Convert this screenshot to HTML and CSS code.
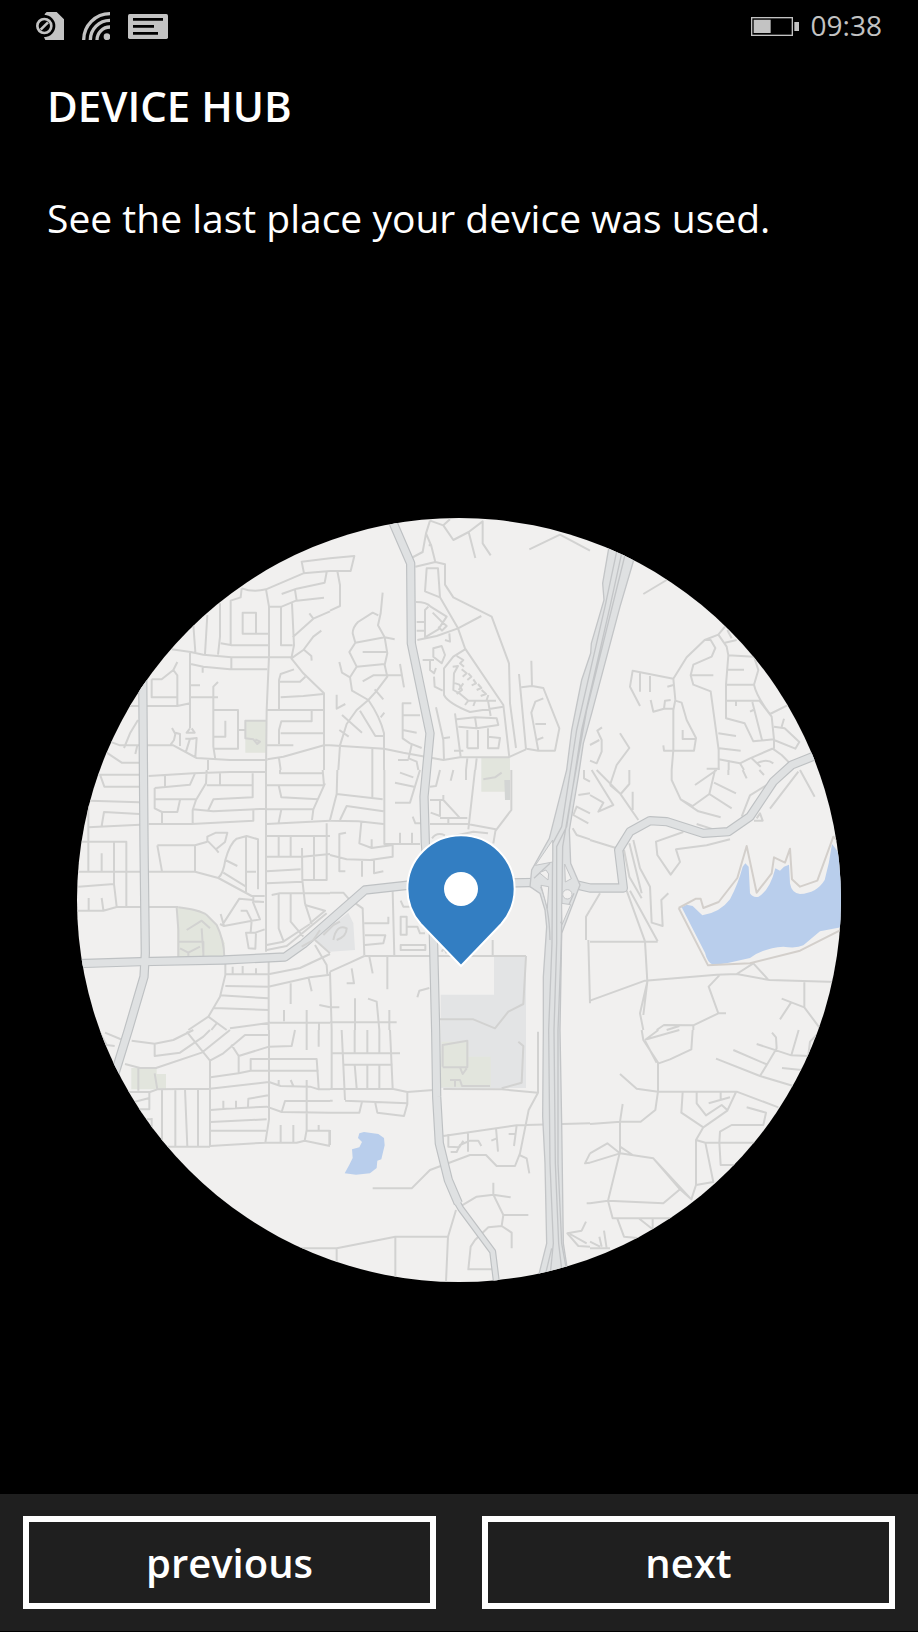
FILE: index.html
```html
<!DOCTYPE html>
<html lang="en">
<head>
    <meta charset="UTF-8">
    <meta name="viewport" content="width=device-width, initial-scale=1.0">
    <title>Device Hub</title>
    <link rel="stylesheet" href="styles.css">
</head>
<body>
    <header class="status-bar">
        <div class="status-icons">
            <svg class="icon-sim" viewBox="0 0 84 84" role="img" aria-label="No SIM">
                <path fill="currentColor" d="M26 6 32 0H62L84 22V84H28L24 76A36 36 0 0 0 26 8Z"/>
                <circle class="sim-gap" cx="25" cy="42" r="33"/>
                <circle class="sim-ring" cx="25" cy="42" r="21"/>
                <path class="sim-ring" d="M14 53 36 31"/>
            </svg>
            <svg class="icon-wifi" viewBox="0 0 84 84" role="img" aria-label="Wi-Fi">
                <path class="wave" d="M5 84A79 79 0 0 1 84 5M25 84A59 59 0 0 1 84 25M45 84A39 39 0 0 1 84 45"/>
                <circle fill="currentColor" cx="75" cy="74" r="10"/>
            </svg>
            <svg class="icon-message" viewBox="0 0 120 75" role="img" aria-label="Message">
                <rect fill="currentColor" width="120" height="75" rx="5"/>
                <path class="lines" d="M15 16H105M15 37H78M15 58H90"/>
            </svg>
        </div>
        <div class="status-info">
            <svg class="icon-battery" viewBox="0 0 144 57" role="img" aria-label="Battery">
                <rect class="shell" x="2" y="2" width="122" height="53"/>
                <path fill="currentColor" d="M8 8H59V48H8ZM130 15H144V42H130Z"/>
            </svg>
            <time>09:38</time>
        </div>
    </header>

    <main class="content">
        <h1>DEVICE HUB</h1>
        <p class="description">See the last place your device was used.</p>

        <svg class="map" viewBox="21 24 2292 2292" role="img" aria-label="Map with the last location of the device">
            <rect class="land" width="2340" height="2340"/>

            <!-- parks -->
            <g class="park">
                <path d="M526 632H588V728H526Z"/>
                <path d="M1234 744H1320V845H1234Z"/>
                <path d="M322 1192 390 1202 440 1244 464 1300V1344H322Z"/>
                <path d="M184 1674H260V1692H288V1738H184Z"/>
            </g>

            <!-- campus -->
            <path class="campus" d="M1272 1340H1368V1734H1112V1454H1272Z"/>
            <path class="campus" d="M780 1250 835 1208 850 1240 855 1320 780 1325 735 1290Z"/>
            <path class="park" d="M1115 1595H1195V1640H1262V1732H1112Z"/>

            <!-- water -->
            <path class="water" d="M1835 1192 1850 1184 1868 1188 1897 1216Q1950 1208 1980 1168 2005 1120 2018 1070L2026 1060 2036 1070 2040 1150Q2050 1165 2066 1160 2100 1140 2116 1075L2130 1082 2142 1070 2157 1064 2160 1120Q2165 1150 2190 1152 2240 1150 2264 1110 2278 1060 2286 1002L2300 1020 2340 1100V1246L2250 1264 2200 1306Q2180 1316 2140 1310 2080 1314 2040 1344L1970 1360 1930 1365Q1912 1358 1905 1328Z"/>
            <path class="water" d="M868 1870 882 1866 925 1872 942 1884 944 1906 934 1948 922 1952 920 1974 900 1990 858 1994 824 1990 838 1964 848 1944 846 1918 868 1912 876 1896 864 1884Z"/>

            <!-- streets, north west -->
            <g class="street">
                <path d="M780 145 695 155 702 190M515 235Q550 248 588 238L700 190 780 183M515 235 512 262 482 272V405L452 400M635 252 680 236 764 218 770 186M675 240 680 272 762 263M588 238 597 290V440L590 600 588 780M597 290H635L678 272M633 290V406H668M666 280 672 406 664 445 700 490 762 550V780M518 308H558V371H518ZM558 371H597M668 382 730 326 780 304M718 310 730 326M664 445 700 420 730 380 754 362M700 418 724 438 725 452"/>
                <path d="M483 406H597M305 418 362 426 400 434 484 442H664M370 345 376 426M412 315 405 432M450 280V380L444 434M484 442V476M360 426V655M362 462 400 470 480 478H592M398 470V488M245 508H275L310 480 322 456M310 480 322 496V585M245 508V562H322M180 588H322L360 580M360 526H390M360 562H444M444 516 430 530V710L436 748M430 600H504V716H430M430 680H466V632M504 660H526V632H588M526 660V685L550 688 562 702 570 695 556 688M590 600H762M672 478 632 492 627 510V598M627 515H690L706 500M632 562 700 558 760 552M588 706H670M725 600V634H634L627 660V702M632 670H762M592 748 640 740 762 706H780M627 745 632 780"/>
                <path d="M204 630 180 670 162 714M120 695 150 706H310L380 744 480 750H592M196 732 202 706M110 728 155 758H208M414 750V780M306 654 316 672 312 690 302 704M316 668 330 672V708M348 725 360 686 380 684 376 740M360 655 350 668H374L365 655M346 686H372"/>
            </g>

            <!-- streets, north -->
            <g class="street" transform="translate(780 0)">
                <path d="M0 145 73 138 62 183H0M22 183 30 225V288L0 302M158 248 152 310 144 346 164 382 172 430 164 465 172 500 138 545 115 570M145 316 128 308 84 336Q68 352 68 370L76 398 58 426 80 470 60 502 66 542 115 570 80 600 50 642 30 706 25 780M76 398 164 382 194 388M98 426H172M80 470 164 462M98 514 130 496H216M210 462 222 532M28 456 36 488 60 502M20 554V596L46 582M134 538 160 568M115 570Q150 620 162 670V780M90 602 136 678H162M152 622 163 608M36 615 96 668M28 660 56 680M0 706 162 716 220 728 340 750 390 742H535L588 718"/>
                <path d="M244 580H218V685L240 700 275 714M218 616H270M218 660 260 668M245 704 236 745 260 755 265 780M204 750H236M127 716V780M244 144 278 126 288 70 300 32M288 70 304 108 316 156M296 106H306M256 170 316 156 345 163V224L370 262 485 320 537 460 540 580 558 714M300 32 340 46 370 90 416 66 458 34V100L482 136M416 66 436 144M340 46 360 28M598 118 690 74 780 122M290 175H324L330 262 285 244ZM330 262 384 355 405 415 520 585 538 742M384 355 454 318M384 355 320 378 262 390"/>
                <path d="M258 276Q290 276 302 290L350 320 325 358 285 382V300L295 290M260 336H284M260 362H284M308 308 332 332 350 348 336 362 325 350M358 370 360 395 345 390M310 415 335 408 345 435 335 460 310 440ZM278 450H312M300 452V480L312 490 318 474M312 500 314 530 338 542M405 418 370 440 342 475V555Q355 580 420 606L520 590M380 438 400 450 390 460 402 470M368 470 384 468 372 490 370 540 388 550M395 478 410 490 398 500M415 490 424 500 412 510M430 508 438 520 425 526M444 522 454 534 440 540M455 540 468 552 452 558M475 555 470 570M370 518 388 524 396 540 380 552M400 520 386 540M388 550 415 572H498M415 572 405 585M436 572 430 588M474 572 482 618"/>
                <path d="M375 610 392 740M380 628 435 622 500 625 505 645 440 655 385 650M435 622 440 655M412 660V715M444 660V715H412M474 655V715H505L510 684 474 680M318 592 340 690 342 750M340 685 360 682M372 722H400M440 745 436 780M412 745 408 780M604 452 606 528 574 532M567 492 588 718M574 532 606 528 640 534 688 655 675 722H625L590 716M640 565 616 575 604 608 625 722M616 642H648M620 690 640 682"/>
            </g>

            <!-- streets, north east -->
            <g class="street" transform="translate(1560 0)">
                <path d="M160 252 230 210M405 350 385 374 410 410 415 436 408 524H492L505 480 492 440 414 436M405 398 440 390M412 360 425 385M385 374 344 390 290 442 250 506 128 482 120 530 150 588M250 506 256 570 250 600V720L245 780M344 390 362 390 376 414 365 440 310 464 302 496 310 524 362 544 386 720V780M302 496H370M410 479H462M150 490V545M180 498V546M250 525 232 530M182 570 190 605 222 596H248M222 596 225 572 242 570M256 572 275 578 290 630 318 684 312 722H222L220 706M278 660V687H318M408 524V625L464 640 490 694 552 688 545 620 508 572H410M492 524Q500 560 540 612L592 586M487 576 516 690M438 574V588M480 605 490 600M552 650 584 655 628 696 616 716 552 690V714L480 745 450 760 386 748M582 626 575 650M385 670 438 678M388 715 452 722M548 716 575 735 600 760M485 745 512 770M500 760Q530 745 550 760M416 750V780M450 760 462 780"/>
                <path d="M36 652 22 662 35 690V725L20 760 0 752M28 690 0 705M90 670 118 714 80 765 75 780M350 776H388"/>
            </g>

            <!-- streets, west -->
            <g class="street" transform="translate(0 780)">
                <path d="M85 14H210M90 14 103 50H208M60 92 208 97M208 132 102 126 95 168M55 100V305M55 172 210 164M236 162H365L550 152V116M236 18 370 10 480 6H588M285 18V50M254 54 360 44 375 10M254 54V115L276 126V160M254 88H380M330 90 322 126H276M410 0 408 40 378 90 368 120V160M450 10V46M410 46H548V10M548 46V82L430 88 415 120M368 118 430 124 588 116M588 0V545M630 0V10H760M590 46H762L758 0M626 46 634 82 745 88M765 40 730 118 726 150M590 118H730M634 118 626 158M590 162 780 152M590 198H780M626 198V258M662 198V258M590 260H698L780 252M732 198V330M770 160V330H698M696 234 697 330 705 400 725 462M590 304 692 298M590 340 697 335M605 375 630 370H780"/>
                <path d="M35 215H169V410M132 215V342L140 410M95 250V302M22 305H375L445 324 545 378H584M25 350 132 342M22 422H100L140 411H325M56 384V420M95 384 100 420M262 226 276 304M262 226H375V304M375 226 412 215M412 200 438 188 472 188 465 216 438 238 412 212ZM438 238 446 248M445 324Q460 310 466 270 480 220 500 206L530 198 564 208V358M528 198V366M528 305H558M466 270 502 288M460 308 528 350M550 378V394L582 396M548 394 570 448 462 468 450 462M550 390 508 386 460 460M452 432 462 468M512 422 530 422 545 452 542 486M528 488H558L556 536 536 535ZM556 488 584 478M626 370V475L640 512M662 370V455L700 500M705 405 765 422 720 460M590 525 640 515 720 462M590 540 650 528 770 430"/>
                <path d="M322 515H400V560M320 412 325 480V560M325 412Q390 420 410 435L440 465Q462 510 463 560M350 480 395 452 420 475M395 475 400 550M330 535 355 548 390 530M355 548V560M466 575V615L450 680 415 740 355 780M488 590V612M518 588V612M558 595V612M466 613H595L690 594 780 552M596 575V780M466 648 595 650 720 622 780 614M450 676 595 685M432 714 595 720M415 740 470 780M440 760 424 780M480 775 600 758H780M662 640V702M716 625 725 664M642 720V754M710 720V780M748 705 780 712M747 758V780M735 525 770 585 772 612"/>
            </g>

            <!-- streets, centre -->
            <g class="street" transform="translate(780 780)">
                <path d="M22 0 20 72 0 150M20 72 158 88M127 0V82M163 0V222H270M160 124 50 108 30 150M0 152 85 154 160 162M94 156 88 220 125 234 188 225V260L120 270 50 268 0 255M125 208V234M48 188 28 192V304H46M96 270V320M132 270V310L160 304M210 188V220M246 188V220M210 8 250 22M195 38 252 50M195 98H240L270 0M248 140 256 160H275M300 50 318 48 330 0M370 0 362 32M408 0V30M435 0 415 178M300 90H340L388 142M330 90V138L302 128M340 75V90M330 144H412M355 145V160M300 162H412L497 178 490 220M544 0V120L497 182M306 205Q320 185 345 196M360 200 430 185 474 190M460 28 495 22 515 8M0 368H40L55 385 98 415 103 555M188 364 193 558M103 460H175V440M105 496H166L160 520 105 525M103 558H588M0 605 60 578 103 558M172 558V658M118 560 128 610M65 595 72 640H50M212 392 220 410H240M212 440H230V494H212ZM230 470H262L270 490H285M212 525H286V540H212ZM262 682 268 662 298 654M75 685V780M114 686 140 695 148 780M178 720V780M0 605 5 780M0 757H200M0 712H28M488 510V558M335 545Q342 530 350 550M588 558 580 702 535 725 495 775 430 748H330"/>
                <path d="M780 130 740 110 730 135 775 160M780 70 745 75M728 175 740 195 780 208M780 420 768 440V510M775 510 780 700M762 0V25L780 35"/>
            </g>
            <path class="marker-block" d="M1303 810H1320V870H1305Z"/>

            <!-- streets, east -->
            <g class="street" transform="translate(1560 780)">
                <path d="M5 0 70 105 25 125 40 98 0 75M20 0 90 70 145 150M75 0 60 45M118 0V42L92 72 60 45M128 65V120M245 0V30L272 88 325 124 392 142M272 88 308 108 358 72 375 0M380 0 315 45M372 38 438 70M358 72 425 115M415 0V15M458 0 470 25M508 0 522 15M630 0 674 80M625 5 540 116M455 140 480 76 530 45M500 145 510 130 518 152H492M320 162 370 178M0 210 78 234M30 370 0 420M110 362 165 514M120 362 203 514M0 515H203M102 240 118 320 155 385M130 210 150 295 180 350 185 458 218 468 214 390 235 370M118 220 155 370M280 186 198 215 202 255 242 314 270 276 258 238 350 226 420 208"/>
                <path d="M165 515 172 635 150 730 160 780M172 635 160 735M0 692 165 632 380 614 440 612 538 630 740 636M388 616 356 650 385 730H408M440 612 490 580 534 628M385 730 310 766 222 765 200 780M310 765V780M268 768 230 780M643 634V712M575 686 643 712 690 775M605 695 570 748"/>
            </g>

            <!-- shore roads -->
            <path class="shore" d="M1826 1194 1878 1166 1892 1166 1900 1194 1946 1176 2002 1104 2030 1008 2060 1148 2105 1090 2112 1042 2145 1058 2160 1016 2166 1108 2190 1130 2242 1112 2290 980 2310 1000M2320 1256 2190 1322 2040 1360 1914 1366 1826 1194"/>

            <!-- streets, south west -->
            <g class="street" transform="translate(0 1560)">
                <path d="M105 8 158 30M88 5 110 45 134 48M185 32 254 41 310 30 370 0M254 41V78L330 68 400 20 420 0M165 102 210 114H258L395 68 480 0M350 5 420 92 460 70 525 15H597M420 92V350M484 44 506 78 597 50 665 48 675 0M506 78V130L422 142M597 0V268L586 338M542 122V87H740L746 175M506 130 542 122H746M710 0V60M746 0V50M420 176 597 156 632 168 720 170 746 178H780M626 150V165M662 150 670 168M710 150V300L704 332M534 230 535 206 595 196M422 240 470 236 590 230 635 246 645 213H780M635 246 780 248M460 212V235M498 212V235M422 276 590 268M422 302H588M420 348 586 338H680L704 332 780 348M632 285V336M670 285V336M710 302H778V345M746 285V300M205 114V182M254 130 262 178M170 186H240L262 178 420 176M238 186V238H205M238 204 195 215M276 180V340M316 180V350M345 178 352 350M384 178V350M290 350H420M245 264V300M230 268H245M680 655H780"/>
            </g>

            <!-- streets, south -->
            <g class="street" transform="translate(780 1560)">
                <path d="M5 0V175M35 0 45 210M74 0V68M112 0V68M148 0V68M180 0 188 175M5 70H210M38 104H188M74 104 80 175M112 104V175M148 104V175M0 177H190L232 186 310 180M340 177 515 178 624 188V5M45 212 232 220M232 186V222L222 258 142 248 135 215M96 215 88 248H0M0 212H8M0 300V345M624 188 596 240 570 370 555 408H500L468 375H420L300 420 245 475H128M568 375 590 385 598 430M340 318 560 286 780 280M355 312V350L388 352 400 332M362 366H380L390 345 420 332H445L454 348M414 305V365M498 294 504 365M484 332 500 325M560 286 552 348M536 312H556M390 530 440 500 490 494 542 502M490 458V494L520 555 515 588 545 608V655M520 555H595M515 588 475 592 435 630 422 650 415 718H490M378 540 354 620 348 755M354 620H196L20 655H0M196 620V745M20 655V700M338 110V45L412 32V112H338M390 112 398 132 410 115M360 150H390L396 168H480M375 150V170M565 35 580 48 575 158 515 175"/>
                <path d="M780 370 765 400 780 398M780 520H770M768 575 755 602 712 610 745 648 780 650M720 612 770 640"/>
            </g>

            <!-- streets, south east -->
            <g class="street" transform="translate(1560 1560)">
                <path d="M155 0 160 30 204 98V184L196 240 152 275H92L0 282M165 30 205 0M170 28 268 0M165 32 200 98M308 0 304 58 240 88 206 100M90 132 140 176 204 185H440L565 232M98 222 90 275V365L54 512 0 520M0 370 52 340 90 370 0 398M90 350 128 375M90 370 190 385 270 478 220 520 54 512 68 565H245M190 385 304 508 318 465V330L340 292 412 242 438 186M270 478 304 508M278 186 274 248 340 292M320 186V220L348 256 395 225 412 240M392 186V210M356 220 420 202M318 330 346 338H495M346 338 370 456 318 465M388 338 390 305 425 285H520L528 248 470 232M388 338 392 405H440M378 86 510 138 610 168M510 138 532 102 560 55 558 22 546 8M430 60 532 104M500 42 604 76 655 78M604 76 626 0M576 114 635 120M655 75 660 35 680 15M82 566 102 620 150 625M148 566 188 598M188 566V598M28 620 35 650M42 602 50 655M0 635 30 650M0 655H60"/>
            </g>

            <!-- main roads: darker edge first, then the surface over it -->
            <defs>
                <g id="main-roads">
                    <path d="M218 480 222 1000 226 1330 222 1400 175 1560 135 1690"/>
                    <path d="M20 1361 210 1355 460 1350 645 1341 700 1302 885 1140 1020 1125 1410 1117"/>
                    <path d="M970 40 1022 160 1024 400 1080 670 1062 860 1066 1000 1090 1270 1097 1560 1100 1760 1108 1900 1135 2010 1165 2080"/>
                    <path d="M1500 1120 1560 1134 1660 1134 1646 1020 1680 965 1740 932 1790 935 1900 970 1975 965 2040 920 2110 815 2165 765 2240 735"/>
                </g>
                <path id="south-road" d="M1158 2070 1172 2095 1268 2225 1281 2330"/>
            </defs>
            <use class="road-edge" href="#main-roads"/>
            <use class="road-edge narrow" href="#south-road"/>
            <use class="road" href="#main-roads"/>
            <use class="road narrow" href="#south-road"/>

            <!-- highway -->
            <path class="highway" d="M1617 110 1598 220 1602 270 1564 400 1562 430 1535 510 1505 660 1490 780 1438 985 1385 1080 1380 1130 1410 1150 1425 1200 1430 1250 1420 1400V1560L1418 1820 1425 1960 1430 2200 1405 2300 1420 2330H1500L1480 2200 1475 1840 1470 1560 1475 1270 1530 1125 1502 1060 1498 960 1525 800 1540 700 1565 610 1650 290 1700 120Z"/>
            <path class="lanes" d="M1640 125 1605 290 1520 660 1475 950 1448 1000 1446 1300 1436 1560 1440 1960 1450 2200 1440 2300M1655 130 1620 290 1535 660 1490 950 1460 1010V1300L1452 1560 1456 1960 1466 2200 1480 2320M1665 135 1550 600 1500 880 1478 1010 1474 1300 1464 1560V1960L1475 2200 1495 2310M1445 2215 1420 2320"/>
            <path class="lanes" d="M1412 1130Q1438 1190 1440 1290M1512 1150 1472 1240M1392 1105 1440 1060"/>
            <path class="island" d="M1448 990V1056L1396 1066ZM1408 1088 1428 1080 1436 1092 1434 1110ZM1413 1126 1436 1130 1432 1195ZM1484 1062 1504 1106 1486 1116ZM1475 1180 1502 1184 1476 1244Z"/>
            <circle class="island" cx="1492" cy="1153" r="14"/>
            <g class="street">
                <path d="M695 1310 730 1290 750 1260M760 1275 790 1245 810 1235M790 1290Q800 1240 830 1255 830 1280 800 1290M735 1290 780 1330"/>
            </g>

            <!-- location pin -->
            <path class="pin" d="M1173 1368 1052 1242C1026 1212 1012 1175 1012 1137A161 161 0 1 1 1334 1137C1334 1175 1320 1212 1294 1242Z"/>
            <circle class="pin-dot" cx="1173" cy="1137" r="51"/>
        </svg>
    </main>

    <footer class="app-bar">
        <button type="button" class="btn">previous</button>
        <button type="button" class="btn">next</button>
    </footer>
</body>
</html>
```
FILE: styles.css
```css
* {
    box-sizing: border-box;
}

body {
    margin: 0;
    min-height: 100vh;
    display: flex;
    flex-direction: column;
    background-color: #000;
    color: #fff;
    font-family: "Open Sans", "Noto Sans", sans-serif;
}

/* status bar */
.status-bar {
    display: flex;
    justify-content: space-between;
    align-items: center;
    height: 52px;
    padding: 0 36px;
    color: #c3c3c3;
}

.status-icons,
.status-info {
    display: flex;
    align-items: center;
}

.status-icons {
    gap: 18px;
}

.status-info {
    gap: 12px;
}

.status-info time {
    font-size: 28px;
    font-weight: 400;
    line-height: 32px;
    padding-bottom: 2px;
}

.icon-sim,
.icon-wifi {
    width: 28px;
    height: 28px;
}

.icon-message {
    width: 40px;
    height: 25px;
}

.icon-battery {
    width: 48px;
    height: 19px;
}

.sim-gap {
    fill: #000;
}

.sim-ring,
.wave,
.shell {
    fill: none;
    stroke: currentColor;
}

.sim-ring {
    stroke-width: 8;
}

.wave {
    stroke-width: 10;
}

.lines {
    stroke: #000;
    stroke-width: 8;
}

.shell {
    stroke-width: 4;
}

/* content */
.content {
    flex: 1;
}

h1 {
    margin: 24px 47px 0;
    font-size: 42px;
    font-weight: 600;
    line-height: 60px;
}

.description {
    margin: 52px 47px 0;
    font-size: 39px;
    font-weight: 400;
    line-height: 60px;
}

.map {
    display: block;
    width: calc(100% - 154px);
    margin: 270px auto 40px;
    border-radius: 50%;
}

.land,
.island {
    fill: #f1f0ef;
}

.park {
    fill: #e2e5dd;
}

.campus {
    fill: #e3e4e5;
}

.marker-block {
    fill: #d3d5d4;
}

.water {
    fill: #b9ceec;
}

.street,
.shore {
    fill: none;
    stroke: #d2d2d1;
    stroke-width: 6;
    stroke-linejoin: round;
}

.shore {
    stroke: #d3cfcb;
}

.road,
.road-edge {
    fill: none;
    stroke: #dfe1e2;
    stroke-width: 21;
    stroke-linejoin: round;
}

.road-edge {
    stroke: #bec1c3;
    stroke-width: 28;
}

.road.narrow {
    stroke-width: 14;
}

.road-edge.narrow {
    stroke-width: 21;
}

.highway {
    fill: #dfe1e2;
    stroke: #c3c5c7;
    stroke-width: 4;
}

.lanes {
    fill: none;
    stroke: #c3c5c7;
    stroke-width: 4;
}

.island {
    stroke: #c3c5c7;
    stroke-width: 3;
}

.pin {
    fill: #337ec2;
    stroke: #fff;
    stroke-width: 6;
}

.pin-dot {
    fill: #fff;
}

/* bottom bar */
.app-bar {
    display: flex;
    gap: 46px;
    padding: 22px 23px;
    margin-bottom: 1px;
    background-color: #1f1f1f;
}

.btn {
    flex: 1;
    height: 93px;
    padding: 0;
    border: 6px solid #fff;
    background: none;
    color: #fff;
    font-family: inherit;
    font-size: 40px;
    font-weight: 600;
    cursor: pointer;
}
```
